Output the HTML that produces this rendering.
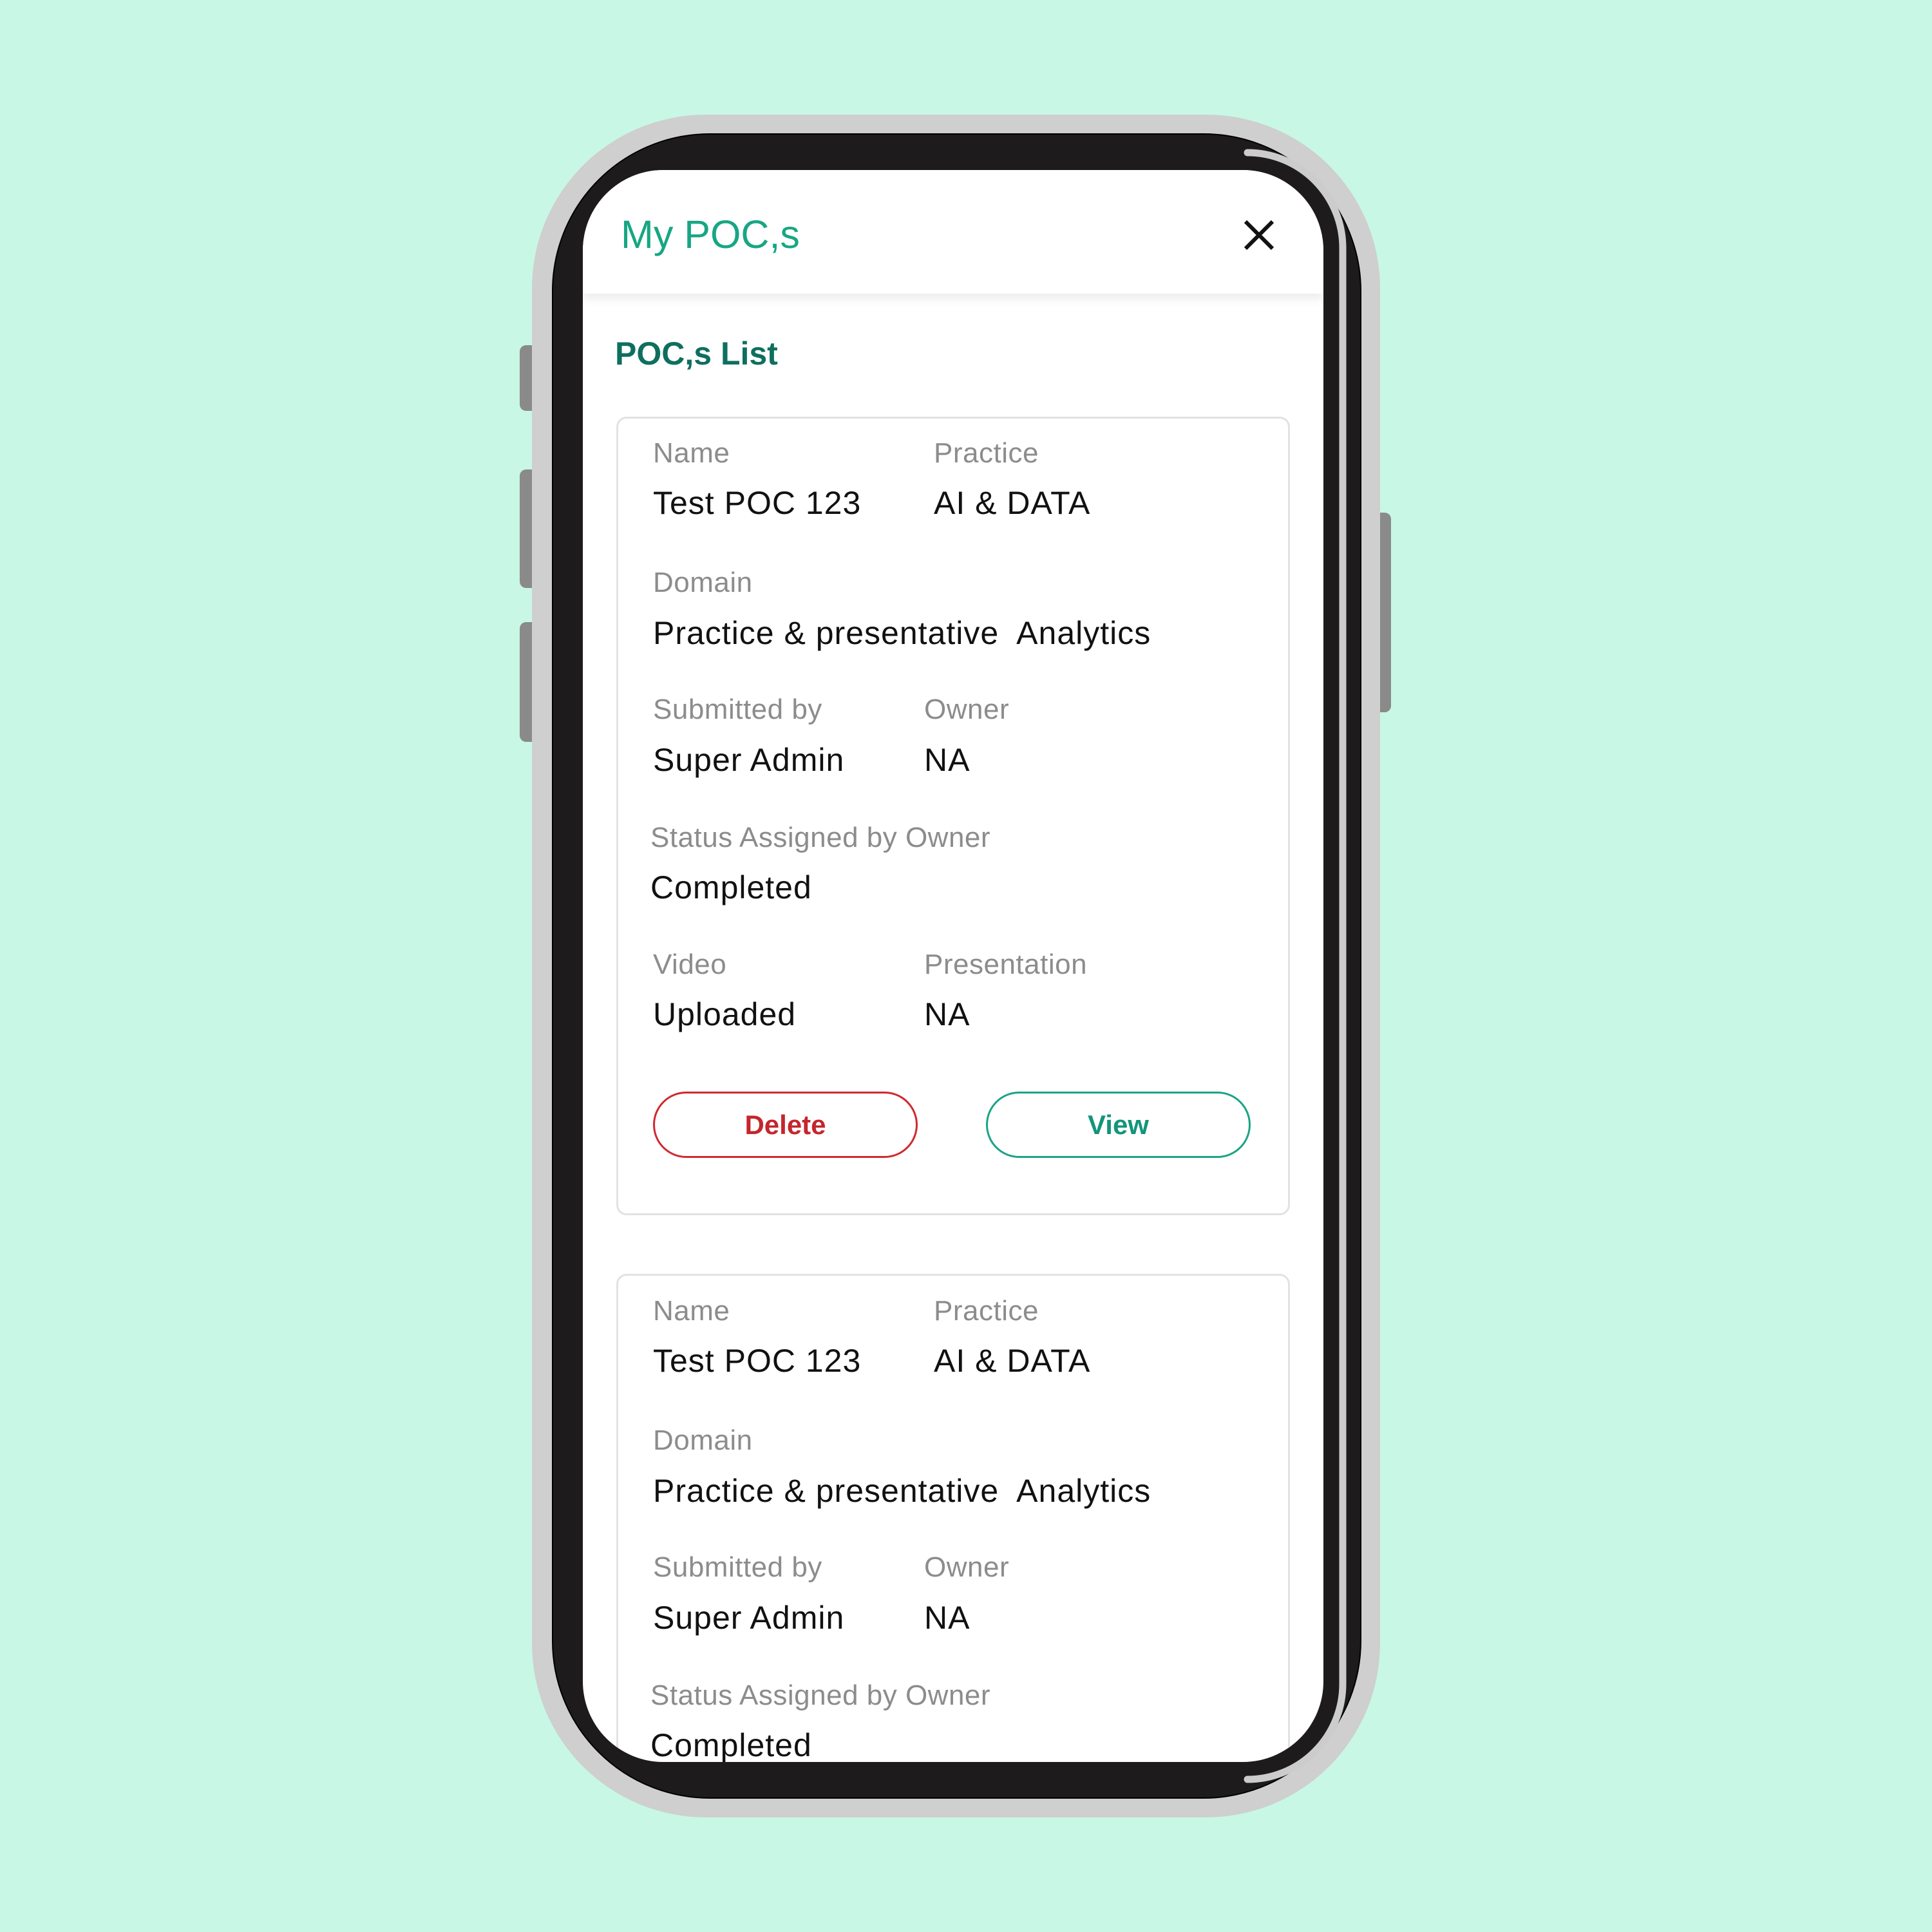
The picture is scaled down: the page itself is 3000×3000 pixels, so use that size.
<!DOCTYPE html>
<html><head><meta charset="utf-8"><style>
*{margin:0;padding:0;box-sizing:border-box}
body{width:3000px;height:3000px;background:#c8f7e5;position:relative;overflow:hidden;font-family:"Liberation Sans",sans-serif}
.a{position:absolute}
.btn{position:absolute;background:#8a8a8a;border-radius:10px}
.lbl{position:absolute;font-size:44px;color:#8c8c8c;line-height:60px;white-space:nowrap;letter-spacing:0.5px}
.val{position:absolute;font-size:50px;color:#111;line-height:60px;white-space:nowrap;letter-spacing:1px}
.pill{position:absolute;height:103px;border-radius:52px;border:3px solid;font-size:42px;font-weight:bold;text-align:center;line-height:97px}
</style></head><body>
<div class="btn" style="left:807px;top:536px;width:30px;height:102px"></div>
<div class="btn" style="left:807px;top:729px;width:30px;height:184px"></div>
<div class="btn" style="left:807px;top:966px;width:30px;height:186px"></div>
<div class="btn" style="left:2130px;top:796px;width:30px;height:310px"></div>
<div class="a" style="left:826px;top:178px;width:1317px;height:2644px;background:#cfcfcf;border-radius:270px"></div>
<div class="a" style="left:857px;top:207px;width:1257px;height:2586px;background:#1d1b1c;border-radius:245px;border:2px solid #000"></div>
<svg class="a" style="left:0;top:0" width="3000" height="3000"><path d="M1937 237 A148 148 0 0 1 2085 385 L2085 2615 A148 148 0 0 1 1937 2763" fill="none" stroke="#cccccc" stroke-width="11" stroke-linecap="round"/></svg>
<div class="a" style="left:905px;top:264px;width:1150px;height:2472px;background:#fff;border-radius:125px;overflow:hidden">
  <div class="a" style="left:0;top:0;width:1150px;height:192px;background:#fff;box-shadow:0 8px 14px rgba(0,0,0,0.08);z-index:2"></div>
  <div class="a" style="left:59px;top:60px;font-size:61px;color:#17a683;line-height:80px;z-index:3">My POC,s</div>
  <svg class="a" style="left:1025px;top:76px;z-index:3" width="50" height="50" viewBox="0 0 50 50"><path d="M4 4L46 46M46 4L4 46" stroke="#111" stroke-width="6"/></svg>
  <div class="a" style="left:50px;top:255px;font-size:50px;font-weight:bold;color:#0f6f5e;line-height:60px">POC,s List</div>
  <div class="a" style="left:52px;top:383px;width:1046px;height:1240px;border:3px solid #e2e2e2;border-radius:16px"></div>
  <div class="a" style="left:52px;top:1714px;width:1046px;height:1000px;border:3px solid #e2e2e2;border-radius:16px"></div>
</div>
<div class="lbl" style="left:1014px;top:674px">Name</div>
<div class="lbl" style="left:1450px;top:674px">Practice</div>
<div class="val" style="left:1014px;top:751px">Test POC 123</div>
<div class="val" style="left:1450px;top:751px">AI &amp; DATA</div>
<div class="lbl" style="left:1014px;top:875px">Domain</div>
<div class="val" style="left:1014px;top:953px">Practice &amp; presentative&nbsp; Analytics</div>
<div class="lbl" style="left:1014px;top:1072px">Submitted by</div>
<div class="lbl" style="left:1435px;top:1072px">Owner</div>
<div class="val" style="left:1014px;top:1150px">Super Admin</div>
<div class="val" style="left:1435px;top:1150px">NA</div>
<div class="lbl" style="left:1010px;top:1271px">Status Assigned by Owner</div>
<div class="val" style="left:1010px;top:1348px">Completed</div>
<div class="lbl" style="left:1014px;top:1468px">Video</div>
<div class="lbl" style="left:1435px;top:1468px">Presentation</div>
<div class="val" style="left:1014px;top:1545px">Uploaded</div>
<div class="val" style="left:1435px;top:1545px">NA</div>
<div class="pill" style="left:1014px;top:1695px;width:411px;border-color:#d0292f;color:#c4262c">Delete</div>
<div class="pill" style="left:1531px;top:1695px;width:411px;border-color:#1aa386;color:#12957a">View</div>

<div class="lbl" style="left:1014px;top:2006px">Name</div>
<div class="lbl" style="left:1450px;top:2006px">Practice</div>
<div class="val" style="left:1014px;top:2083px">Test POC 123</div>
<div class="val" style="left:1450px;top:2083px">AI &amp; DATA</div>
<div class="lbl" style="left:1014px;top:2207px">Domain</div>
<div class="val" style="left:1014px;top:2285px">Practice &amp; presentative&nbsp; Analytics</div>
<div class="lbl" style="left:1014px;top:2404px">Submitted by</div>
<div class="lbl" style="left:1435px;top:2404px">Owner</div>
<div class="val" style="left:1014px;top:2482px">Super Admin</div>
<div class="val" style="left:1435px;top:2482px">NA</div>
<div class="lbl" style="left:1010px;top:2603px">Status Assigned by Owner</div>
<div class="val" style="left:1010px;top:2680px;height:56px;overflow:hidden">Completed</div>
</body></html>
